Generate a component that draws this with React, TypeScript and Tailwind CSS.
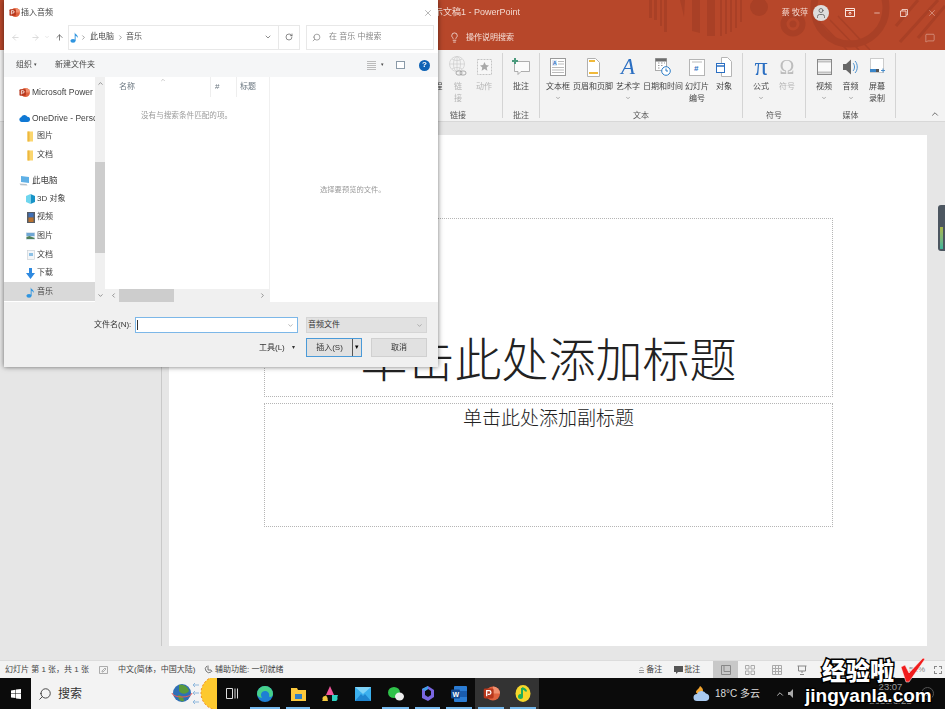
import { ChevronDown, ChevronUp, ChevronLeft, ChevronRight, ArrowLeft, ArrowRight, ArrowUp, RotateCw, Search, X, Lightbulb, MessageSquare, Minus, User } from "lucide-react";
import type { ReactNode } from "react";

function PptIcon({ size = 11 }: { size?: number }) {
  return (
    <svg width={size} height={size} viewBox="0 0 12 12" className="shrink-0">
      <circle cx="7" cy="6" r="5" fill="#e0633f" />
      <path d="M7 1a5 5 0 0 1 5 5H7z" fill="#f0906f" />
      <rect x="0.5" y="2.5" width="7" height="7" rx="1" fill="#b7371c" />
      <path d="M2.6 8V4h1.7a1.2 1.2 0 0 1 0 2.6H3.4" stroke="#fff" strokeWidth="0.9" fill="none" />
    </svg>
  );
}

function Note({ size = 12, color = "#2f95e0" }: { size?: number; color?: string }) {
  return (
    <svg width={size} height={size} viewBox="0 0 12 12" className="shrink-0">
      <ellipse cx="4" cy="9.8" rx="2.6" ry="1.9" fill={color} />
      <path d="M5.7 9.8V1.2C6 3.4 9.6 4 8.7 7 8.3 5.6 7 5 6.6 4.8V9.8z" fill={color} />
    </svg>
  );
}

function FolderTab() {
  return (
    <svg width="7" height="11" viewBox="0 0 7 11" className="shrink-0">
      <rect x="0.5" y="0.5" width="5.5" height="10" fill="#fbd66f" />
      <rect x="0.5" y="0.5" width="2" height="10" fill="#eeb83f" />
    </svg>
  );
}

const treeIcons: Record<string, ReactNode> = {
  ppt: <PptIcon />,
  cloud: (
    <svg width="11" height="8" viewBox="0 0 11 8" className="shrink-0">
      <path d="M2.5 8a2.4 2.4 0 0 1-.4-4.7A3.4 3.4 0 0 1 8.4 2.8 2.6 2.6 0 0 1 8.5 8z" fill="#0f78d4" />
    </svg>
  ),
  folder: <FolderTab />,
  pc: (
    <svg width="11" height="11" viewBox="0 0 11 11" className="shrink-0">
      <path d="M2 1l8 1v6L2 7z" fill="#5fb0e6" />
      <path d="M0.5 8.5l7 .5 1 1.5-7-.3z" fill="#b9c2ca" />
    </svg>
  ),
  cube: (
    <svg width="9" height="10" viewBox="0 0 9 10" className="shrink-0">
      <path d="M4.5 0L9 2v6l-4.5 2z" fill="#1893c7" />
      <path d="M4.5 0L0 2v6l4.5 2z" fill="#6fd6ee" />
    </svg>
  ),
  video: (
    <svg width="8" height="11" viewBox="0 0 8 11" className="shrink-0">
      <rect width="8" height="11" fill="#555c66" />
      <rect x="1.5" y="1" width="5" height="4.5" fill="#3f6fb5" />
      <rect x="1.5" y="5.5" width="5" height="4.5" fill="#b9722f" />
    </svg>
  ),
  image: (
    <svg width="9" height="8" viewBox="0 0 9 8" className="shrink-0">
      <rect width="9" height="8" fill="#dbe6ee" />
      <rect x="0.5" y="1" width="8" height="3" fill="#6fa6d4" />
      <path d="M0.5 7V5l3-1 5 2v1z" fill="#4f7f59" />
    </svg>
  ),
  doc: (
    <svg width="8" height="10" viewBox="0 0 8 10" className="shrink-0">
      <rect x="0.5" y="0.5" width="7" height="9" fill="#f4f6f8" stroke="#c4ccd3" strokeWidth="0.6" />
      <rect x="2" y="3" width="4" height="3" fill="#8cc0e5" />
    </svg>
  ),
  down: (
    <svg width="9" height="11" viewBox="0 0 9 11" className="shrink-0">
      <path d="M3 0h3v5h3L4.5 11 0 5h3z" fill="#2f8ae0" />
    </svg>
  ),
  note: <Note size={12} />,
};

function TreeRow({ icon, label, sub, active, top }: { icon: string; label: string; sub?: boolean; active?: boolean; top?: boolean }) {
  return (
    <div className={`flex h-[18.6px] items-center whitespace-nowrap overflow-hidden ${sub ? "gap-[1px] pl-[21px] text-[8px]" : "gap-[2px] pl-[15px]"} ${active ? "bg-[#d9d9d9]" : ""} ${top ? "mt-[6.5px]" : ""}`}>
      <span className="flex w-[11px] justify-center">{treeIcons[icon]}</span>
      <span>{label}</span>
    </div>
  );
}

function FileDialog() {
  return (
    <div className="absolute left-[4px] top-0 z-10 flex h-[367px] w-[434px] flex-col bg-white text-[#4a4a4a] shadow-[0_0_5px_rgba(0,0,0,0.55)] text-[8px]">
      <div className="flex h-[24px] shrink-0 items-center gap-[1px] pl-[5px] pr-[5px] pt-[1px] text-[#444]">
        <PptIcon size={11} />
        <span className="text-[8px]">插入音频</span>
        <X size={10} strokeWidth={1} className="ml-auto text-[#555]" />
      </div>

      <div className="flex h-[26px] shrink-0 items-center pl-[7px] pr-[4px]">
        <ArrowLeft size={9} className="text-[#d0d0d0]" />
        <ArrowRight size={9} className="ml-[11px] text-[#d0d0d0]" />
        <ChevronDown size={6} className="ml-[4px] text-[#d0d0d0]" />
        <ArrowUp size={9} className="ml-[5px] text-[#555]" />
        <div className="ml-[4px] flex h-[25px] w-[232px] items-center border border-[#e8e8e8] pl-[0px]">
          <Note size={12} />
          <ChevronRight size={7} className="ml-[-1px] text-[#666]" />
          <span className="ml-[3px]">此电脑</span>
          <ChevronRight size={7} className="ml-[3px] text-[#666]" />
          <span className="ml-[2px]">音乐</span>
          <ChevronDown size={8} className="ml-auto mr-[6px] text-[#555]" />
          <div className="flex h-full w-[21px] items-center justify-center border-l border-[#e8e8e8]">
            <RotateCw size={8} className="text-[#555]" />
          </div>
        </div>
        <div className="ml-[6px] flex h-[25px] flex-1 items-center border border-[#e8e8e8] pl-[5px] text-[#888]">
          <Search size={9} className="-scale-x-100 text-[#888]" />
          <span className="ml-[8px]">在 音乐 中搜索</span>
        </div>
      </div>

      <div className="mt-[3px] flex h-[24px] shrink-0 items-center bg-[#f5f6f7] pl-[12px] pr-[8px]">
        <span>组织</span>
        <span className="ml-[2px] text-[5px]">▾</span>
        <span className="ml-[18px]">新建文件夹</span>
        <svg width="9" height="9" viewBox="0 0 9 9" className="ml-auto">
          <path d="M0 .5h9M0 2.5h9M0 4.500h9M0 6.500h9M0 8.500h9" stroke="#bbb" />
        </svg>
        <span className="ml-[5px] text-[5px]">▾</span>
        <span className="ml-[12px] h-[8px] w-[9px] border border-[#8a9aa8] bg-white" />
        <span className="ml-[14px] flex h-[11px] w-[11px] items-center justify-center rounded-full bg-[#0f63b5] text-[8px] font-bold text-white">?</span>
      </div>

      <div className="flex h-[225px] shrink-0">
        <div className="w-[91px] shrink-0 pt-[6.5px] text-[8.5px] text-[#3f3f3f]">
          <TreeRow icon="ppt" label="Microsoft Power" />
          <TreeRow icon="cloud" label="OneDrive - Persc" top />
          <TreeRow icon="folder" label="图片" sub />
          <TreeRow icon="folder" label="文档" sub />
          <TreeRow icon="pc" label="此电脑" top />
          <TreeRow icon="cube" label="3D 对象" sub />
          <TreeRow icon="video" label="视频" sub />
          <TreeRow icon="image" label="图片" sub />
          <TreeRow icon="doc" label="文档" sub />
          <TreeRow icon="down" label="下载" sub />
          <TreeRow icon="note" label="音乐" sub active />
        </div>
        <div className="flex w-[10px] shrink-0 flex-col items-center bg-[#f0f0f0] text-[#555]">
          <ChevronUp size={7} className="mt-[3px]" />
          <div className="mt-[75px] h-[91px] w-full bg-[#cdcdcd]" />
          <ChevronDown size={7} className="mt-auto mb-[3px]" />
        </div>
        <div className="flex w-[165px] shrink-0 flex-col border-r border-[#f0f0f0]">
          <div className="relative flex h-[20px] shrink-0 items-center text-[#6b7780]">
            <span className="ml-[14px] w-[92px] border-r border-[#eee] leading-[20px]">名称</span>
            <span className="w-[26px] border-r border-[#eee] pl-[4px] leading-[20px]">#</span>
            <span className="pl-[3px] leading-[20px]">标题</span>
            <ChevronUp size={6} className="absolute left-[55px] top-0 text-[#999]" />
          </div>
          <div className="mt-[13px] pl-[36px] text-[7.6px] text-[#9a9a9a]">没有与搜索条件匹配的项。</div>
          <div className="mt-auto flex h-[13px] items-center bg-[#f0f0f0] pl-[5px] text-[#555]">
            <ChevronLeft size={7} />
            <div className="ml-[2px] h-full w-[55px] bg-[#cdcdcd]" />
            <ChevronRight size={7} className="ml-auto mr-[3px]" />
          </div>
        </div>
        <div className="flex-1 pl-[50px] pt-[108px] text-[7.300px] text-[#9a9a9a]">选择要预览的文件。</div>
      </div>

      <div className="flex flex-1 flex-col bg-[#f0f0f0] pl-[90px] pr-[11px] pt-[15px] text-[#333]">
        <div className="flex h-[16px] items-center">
          <span className="w-[41px] whitespace-nowrap">文件名(N):</span>
          <div className="flex h-[16px] w-[163px] items-center justify-between border border-[#7cb7e8] bg-white pl-[1px] pr-[3px]">
            <span className="h-[10px] w-px bg-[#333]" />
            <ChevronDown size={7} className="text-[#888]" />
          </div>
          <div className="ml-[8px] flex h-[16px] flex-1 items-center justify-between border border-[#d5d5d5] bg-[#e1e1e1] pl-[1px] pr-[3px]">
            <span>音频文件</span>
            <ChevronDown size={7} className="text-[#888]" />
          </div>
        </div>
        <div className="mt-[5px] flex h-[19px] items-center">
          <span className="ml-[165px] w-[26px] whitespace-nowrap">工具(L)</span>
          <span className="ml-[7px] text-[6px]">▾</span>
          <div className="ml-[11px] flex h-[19px] w-[56px] border border-[#4a9ad8] bg-[#e1e1e1]">
            <span className="flex-1 text-center leading-[17px]">插入(S)</span>
            <span className="flex w-[9px] items-center justify-center border-l border-[#555] text-[7px] text-black">▾</span>
          </div>
          <div className="ml-[9px] h-[19px] flex-1 border border-[#d0d0d0] bg-[#e1e1e1] text-center leading-[17px]">取消</div>
        </div>
      </div>
    </div>
  );
}

function TitleArt() {
  return (
    <svg width="945" height="50" viewBox="0 0 945 50" className="absolute left-0 top-0" fill="#a94026">
      <path d="M649 0h3v18h-3zM654 0h3v20h-3zM660 0h2v26h-2zM664 0h3v32h-3zM680 0h5l-1 17zM692 0h8v33l-8-2zM707 0h8v36h-8zM720 0h2v36h-2zM725 0h2v34h-2zM730 0h2v32h-2zM735 0h2v28h-2zM740 0h2v22h-2z" />
      <circle cx="759" cy="7" r="9" />
      <circle cx="793" cy="24" r="9.5" fill="none" stroke="#a94026" strokeWidth="6" />
      <circle cx="793" cy="24" r="3.5" />
      <circle cx="850" cy="8" r="36" fill="none" stroke="#a94026" strokeWidth="7" />
      <path d="M822 24l25 26M830 20l29 30M838 16l32 34" stroke="#a94026" strokeWidth="1.5" fill="none" />
      <path d="M896 26l22-26M900 42l38-42M918 38l27-32" stroke="#a94026" strokeWidth="3" fill="none" />
    </svg>
  );
}

function TitleBar() {
  return (
    <div className="relative h-[50px] shrink-0 bg-[#b7472a] text-[#f3d9d0]">
      <TitleArt />
      <div className="relative flex h-[25px] items-center text-[9px]">
        <span className="ml-[425px] whitespace-nowrap">演示文稿1 - PowerPoint</span>
        <span className="ml-auto text-[8px] whitespace-nowrap">蔡 牧萍</span>
        <span className="ml-[5px] flex h-[16px] w-[16px] items-center justify-center rounded-full bg-[#dedede] text-[#555]">
          <User size={12} strokeWidth={1.5} />
        </span>
        <svg width="10" height="9" viewBox="0 0 10 9" className="ml-[16px]" fill="none" stroke="#fbe6df">
          <path d="M.5.5h9v8h-9zM.5 2.500h9M5 7V4M3.500 5.300L5 4l1.500 1.300" />
        </svg>
        <Minus size={8} className="ml-[18px] text-[#fbe6df]" />
        <svg width="8" height="8" viewBox="0 0 8 8" className="ml-[19px]" fill="none" stroke="#fbe6df" strokeWidth="0.8">
          <path d="M.5 2h5.500v5.500H.5zM2 2V.5h5.500V6H6" />
        </svg>
        <X size={10} strokeWidth={1} className="ml-[19px] mr-[8px] text-[#fbe6df]" />
      </div>
      <div className="relative flex h-[25px] items-center text-[8px]">
        <Lightbulb size={11} strokeWidth={1.5} className="ml-[449px] text-white" />
        <span className="ml-[6px] text-[#f6e1da]">操作说明搜索</span>
        <MessageSquare size={10} strokeWidth={1} className="ml-auto mr-[10px] text-[#f6e1da]" />
      </div>
    </div>
  );
}

const ribbonIcons: Record<string, ReactNode> = {
  link: (
    <svg width="18" height="22" viewBox="0 0 18 22" fill="none" stroke="#cfcfcf" strokeWidth="0.8">
      <circle cx="8" cy="8" r="7.500" />
      <path d="M.5 8h15M8 .5v15M3 3c3 2 7 2 10 0M3 13c3-2 7-2 10 0" />
      <ellipse cx="8" cy="8" rx="3.500" ry="7.500" />
      <rect x="7" y="15" width="6" height="4" rx="2" stroke="#999" fill="#f3f3f3" />
      <rect x="11" y="15" width="6" height="4" rx="2" stroke="#999" />
    </svg>
  ),
  action: (
    <svg width="15" height="16" viewBox="0 0 15 16">
      <rect x="0.500" y="0.500" width="14" height="15" fill="#f7f7f7" stroke="#c4c4c4" strokeDasharray="2 1" />
      <path d="M7.500 3l1.400 3 3.100.4-2.300 2.100.7 3.200-2.900-1.700-2.900 1.700.7-3.200L3 6.400 6.100 6z" fill="#a9a9a9" />
    </svg>
  ),
  comment: (
    <svg width="18" height="18" viewBox="0 0 18 18">
      <path d="M2.500 3.500h15v10H9l-3 3v-3H2.500z" fill="#fbfbfb" stroke="#9a9a9a" strokeWidth="0.8" />
      <path d="M3 0v6M0 3h6" stroke="#4a9a7c" strokeWidth="2" />
    </svg>
  ),
  textbox: (
    <svg width="16" height="18" viewBox="0 0 16 18">
      <rect x="0.500" y="0.500" width="15" height="17" fill="#fff" stroke="#9a9a9a" />
      <rect x="2" y="2" width="5" height="6" fill="#dfe9f5" />
      <text x="2.800" y="7" fontSize="5.500" fontWeight="700" fill="#2b6fc2" fontFamily="Liberation Sans">A</text>
      <path d="M8 3.500h6M8 6h6M2 9.500h12M2 12h12M2 14.500h12" stroke="#aaa" strokeWidth="0.8" />
    </svg>
  ),
  header: (
    <svg width="13" height="19" viewBox="0 0 13 19">
      <path d="M.5.5h8l4 4v14H.5z" fill="#fff" stroke="#b0b0b0" />
      <rect x="2" y="2" width="6" height="2" fill="#f0b93a" />
      <rect x="2" y="14" width="9" height="2" fill="#f0b93a" />
    </svg>
  ),
  art: <span className="text-[23px] italic leading-[22px] text-[#2b6fc2] [font-family:'Liberation_Serif',serif]">A</span>,
  date: (
    <svg width="16" height="18" viewBox="0 0 16 18">
      <rect x="0.500" y="0.500" width="11" height="12" fill="#fff" stroke="#aaa" />
      <rect x="0.500" y="0.500" width="11" height="3" fill="#6d6d6d" />
      <path d="M3 5h1.500M6 5h1.500M9 5h1M3 7.500h1.500M6 7.500h1.500M3 10h1.500" stroke="#999" />
      <circle cx="11" cy="13" r="4.300" fill="#fff" stroke="#2b7cc7" />
      <path d="M11 10.500V13h2" stroke="#2b7cc7" fill="none" />
    </svg>
  ),
  slidenum: (
    <svg width="16" height="17" viewBox="0 0 16 17">
      <rect x="0.500" y="0.500" width="15" height="16" fill="#fff" stroke="#b5b5b5" />
      <path d="M3 3h10" stroke="#aaa" strokeWidth="0.8" />
      <text x="5" y="12" fontSize="8" fontWeight="700" fill="#2b6fc2" fontFamily="Liberation Sans">#</text>
    </svg>
  ),
  object: (
    <svg width="16" height="20" viewBox="0 0 16 20">
      <path d="M5.500.5h6l4 4v15h-10z" fill="#fff" stroke="#b5b5b5" />
      <rect x="0.500" y="6.500" width="8" height="9" fill="#fff" stroke="#2b6fc2" />
      <path d="M.5 9h8" stroke="#2b6fc2" strokeWidth="1.500" />
    </svg>
  ),
  pi: <span className="text-[26px] leading-[22px] text-[#2b6fc2] [font-family:'Liberation_Serif',serif]">π</span>,
  omega: <span className="text-[20px] leading-[22px] text-[#bdbdbd] [font-family:'Liberation_Serif',serif]">Ω</span>,
  video: (
    <svg width="15" height="16" viewBox="0 0 15 16">
      <rect x="0.500" y="0.500" width="14" height="15" fill="#fafafa" stroke="#888" />
      <path d="M.5 2.500h14M.5 13.500h14" stroke="#888" strokeWidth="2" strokeDasharray="1 1" />
    </svg>
  ),
  audio: (
    <svg width="15" height="16" viewBox="0 0 15 16" fill="none">
      <path d="M0 5h3l5-4.500v15L3 11H0z" fill="#666" />
      <path d="M10 4c2 2 2 6 0 8M12 2c3 3 3 9 0 12" stroke="#3b86c9" strokeWidth="0.9" />
    </svg>
  ),
  screen: (
    <svg width="15" height="18" viewBox="0 0 15 18">
      <rect x="0.500" y="0.500" width="13" height="14" fill="#fff" stroke="#ccc" />
      <rect x="0" y="11" width="6" height="3" fill="#3b86c9" />
      <rect x="6" y="11" width="3" height="3" fill="#555" />
      <path d="M11 12.500h4M13 10.500v4" stroke="#3b86c9" strokeWidth="0.9" />
    </svg>
  ),
};

function RibbonItem({ w, icon, label, chevron, muted }: { w: number; icon: string; label: string[]; chevron?: boolean; muted?: boolean }) {
  return (
    <div style={{ width: w }} className={`flex shrink-0 flex-col items-center ${muted ? "text-[#b5b5b5]" : "text-[#444]"}`}>
      <div className="flex h-[28px] items-center justify-center">{ribbonIcons[icon]}</div>
      {label.map((l) => (
        <span key={l} className="whitespace-nowrap leading-[12px]">{l}</span>
      ))}
      {chevron && <ChevronDown size={6} className="mt-[2px] text-[#666]" />}
    </div>
  );
}

function RibbonGroup({ title, width, pad = 0, titleClass = "left-0 right-0", children }: { title: string; width: number; pad?: number; titleClass?: string; children: ReactNode }) {
  return (
    <div style={{ width, paddingLeft: pad }} className="relative my-[3px] flex shrink-0 border-r border-[#d4d4d4]">
      {children}
      <span className={`absolute bottom-[-4px] text-center leading-[12px] text-[#555] ${titleClass}`}>{title}</span>
    </div>
  );
}

function Ribbon() {
  return (
    <div className="relative flex h-[72px] shrink-0 border-b border-[#d8d8d8] bg-[#f3f3f3] text-[8px]">
      <RibbonGroup title="链接" width={503} pad={432} titleClass="left-[445px] w-[26px]">
        <RibbonItem w={13} icon="none" label={["程"]} />
        <RibbonItem w={26} icon="link" label={["链", "接"]} muted />
        <RibbonItem w={26} icon="action" label={["动作"]} muted />
      </RibbonGroup>
      <RibbonGroup title="批注" width={37} pad={0}>
        <RibbonItem w={36} icon="comment" label={["批注"]} />
      </RibbonGroup>
      <RibbonGroup title="文本" width={203} pad={1}>
        <RibbonItem w={34} icon="textbox" label={["文本框"]} chevron />
        <RibbonItem w={36} icon="header" label={["页眉和页脚"]} />
        <RibbonItem w={34} icon="art" label={["艺术字"]} chevron />
        <RibbonItem w={36} icon="date" label={["日期和时间"]} />
        <RibbonItem w={32} icon="slidenum" label={["幻灯片", "编号"]} />
        <RibbonItem w={22} icon="object" label={["对象"]} />
      </RibbonGroup>
      <RibbonGroup title="符号" width={63} pad={5}>
        <RibbonItem w={26} icon="pi" label={["公式"]} chevron />
        <RibbonItem w={26} icon="omega" label={["符号"]} muted />
      </RibbonGroup>
      <RibbonGroup title="媒体" width={90} pad={5}>
        <RibbonItem w={26} icon="video" label={["视频"]} chevron />
        <RibbonItem w={27} icon="audio" label={["音频"]} chevron />
        <RibbonItem w={26} icon="screen" label={["屏幕", "录制"]} />
      </RibbonGroup>
      <ChevronUp size={10} className="absolute bottom-[2px] right-[5px] text-[#555]" />
    </div>
  );
}

function Workspace() {
  return (
    <div className="flex min-h-0 flex-1 bg-[#e6e6e6] pb-[14px]">
      <div className="w-[162px] shrink-0 border-r border-[#c9c9c9]" />
      <div className="ml-[7px] mt-[13px] flex w-[758px] shrink-0 flex-col bg-white pl-[95px] pt-[83px] text-[#222]">
        <div className="flex h-[179px] w-[569px] items-end justify-center border border-dotted border-[#b5b5b5] text-[47px] font-light leading-[70px]">
          单击此处添加标题
        </div>
        <div className="mt-[6px] flex h-[124px] w-[569px] justify-center border border-dotted border-[#b5b5b5] text-[19px] font-light leading-[29px]">
          单击此处添加副标题
        </div>
      </div>
    </div>
  );
}

function StatusBar() {
  return (
    <div className="flex h-[18px] shrink-0 items-center border-t border-[#dcdcdc] bg-[#f3f3f3] pl-[5px] pr-[3px] text-[8px] text-[#444]">
      <span className="w-[93px] whitespace-nowrap">幻灯片 第 1 张，共 1 张</span>
      <svg width="9" height="8" viewBox="0 0 9 8" className="ml-[1px]" fill="none" stroke="#999" strokeWidth="0.8">
        <path d="M.5.5h8v7h-8zM3 5l3-3 1 1-3 3H3z" />
      </svg>
      <span className="ml-[10px] w-[80px] whitespace-nowrap">中文(简体，中国大陆)</span>
      <svg width="9" height="9" viewBox="0 0 9 9" className="ml-[6px]" fill="none" stroke="#555" strokeWidth="0.8">
        <path d="M3 1a3.500 3.500 0 1 0 4 6M4 .5V5h3l1 2" />
      </svg>
      <span className="ml-[2px] whitespace-nowrap">辅助功能: 一切就绪</span>
      <div className="ml-auto flex items-center">
        <svg width="5" height="7" viewBox="0 0 5 7" fill="none" stroke="#999"><path d="M0 4.500h5M0 6.500h5M1 2.500L2.500 1 4 2.500" /></svg>
        <span className="ml-[2px]">备注</span>
        <svg width="9" height="8" viewBox="0 0 9 8" className="ml-[12px]"><path d="M0 0h9v6H4L2 8V6H0z" fill="#555" /></svg>
        <span className="ml-[1px]">批注</span>
        <div className="ml-[13px] flex h-[17px] w-[25px] items-center justify-center bg-[#c8c8c8]">
          <svg width="10" height="10" viewBox="0 0 10 10" fill="none" stroke="#888"><path d="M.5.5h9v9h-9zM3 .5v6h6.500" /></svg>
        </div>
        <svg width="10" height="10" viewBox="0 0 10 10" className="ml-[7px]" fill="none" stroke="#aaa"><path d="M.5.5h3.500v3.500H.5zM6 .5h3.500v3.500H6zM.5 6h3.500v3.500H.5zM6 6h3.500v3.500H6z" /></svg>
        <svg width="10" height="10" viewBox="0 0 10 10" className="ml-[17px]" fill="none" stroke="#aaa"><path d="M.5.5h9v9h-9zM3.500.5v9M6.500.5v9M.5 3.500h9M.5 6.500h9" /></svg>
        <svg width="10" height="10" viewBox="0 0 10 10" className="ml-[15px]" fill="none" stroke="#888"><path d="M.5 1h9M1.500 1v5h7V1M5 6v2M3 9.500h4" /></svg>
        <span className="ml-[95px] text-[#888]">+</span>
        <span className="ml-[2px] text-[#888]">52%</span>
        <span className="ml-[9px] h-[8px] w-[8px] border border-dashed border-[#888]" />
      </div>
    </div>
  );
}

function TaskIcon({ w, active, bar, children }: { w: number; active?: boolean; bar?: boolean; children: ReactNode }) {
  return (
    <div style={{ width: w }} className={`relative flex h-full shrink-0 items-center justify-center ${active ? "bg-[#333333]" : ""}`}>
      {children}
      {bar && <span className="absolute bottom-0 left-[3px] right-[3px] h-[2px] bg-[#76b9ed]" />}
    </div>
  );
}

function Taskbar() {
  return (
    <div className="flex h-[31px] shrink-0 items-center bg-[#0b0b0b] text-white">
      <div className="flex h-full w-[31px] shrink-0 items-center justify-center">
        <svg width="10" height="10" viewBox="0 0 10 10" fill="#fff"><path d="M0 1.400L4.500.7v3.900H0zM5 .6L10 0v4.600H5zM0 5.100h4.500V9L0 8.400zM5 5.100h5V10L5 9.400z" /></svg>
      </div>
      <div className="relative flex h-full w-[186px] shrink-0 items-center overflow-hidden bg-[#f3f3f3] pl-[7px] text-[#333]">
        <Search size={14} strokeWidth={1.5} className="-scale-x-100" />
        <span className="ml-[6px] text-[12px]">搜索</span>
        <svg width="50" height="31" viewBox="0 0 50 31" className="absolute right-0 top-0">
          <circle cx="15" cy="15" r="9" fill="#2f6fb5" />
          <path d="M12 7c5-1 9 2 10 6-3 4-8 3-10 0zM11 17c3 0 6 2 6 6-3 1-6-1-6-6z" fill="#5a9a3a" />
          <path d="M5 15a10 4 0 0 0 20 0" stroke="#e85a5a" fill="none" />
          <path d="M32 7h-6M26 7l2-2M26 7l2 2M32 15h-6M26 15l2-2M26 15l2 2M32 24h-6M26 24l2-2M26 24l2 2" stroke="#8fb8dd" fill="none" />
          <circle cx="51" cy="15" r="17" fill="#fdc92f" stroke="#f08a24" strokeDasharray="2 2" />
        </svg>
      </div>
      <TaskIcon w={30}>
        <svg width="12" height="11" viewBox="0 0 12 11" fill="none" stroke="#ddd"><path d="M.5.500h6v10h-6zM9 .5v10M11.500.5v10" /></svg>
      </TaskIcon>
      <TaskIcon w={36} bar>
        <svg width="16" height="16" viewBox="0 0 16 16">
          <circle cx="8" cy="8" r="8" fill="#1e7fd4" />
          <path d="M0 8a8 8 0 0 1 16 0c0 3-3 3.500-4 2.500 1-3-1-5.500-4-5.500-4 0-5 4-3 7-2-.5-5-1.500-5-4z" fill="#46d18a" />
        </svg>
      </TaskIcon>
      <TaskIcon w={30} bar>
        <svg width="15" height="14" viewBox="0 0 15 14">
          <path d="M0 1h6l1 2h8v11H0z" fill="#fbc93d" />
          <rect x="4" y="7" width="7" height="5" fill="#2f7fc8" />
        </svg>
      </TaskIcon>
      <TaskIcon w={34}>
        <svg width="16" height="15" viewBox="0 0 16 15">
          <path d="M8 0l4 9H4z" fill="#f0569a" />
          <path d="M4 9l-4 6h6z" fill="#f3c93d" />
          <path d="M10 9l6 0-2 6h-4z" fill="#2fd0c0" />
          <circle cx="3" cy="12.500" r="2.500" fill="#f3c93d" />
          <circle cx="13" cy="12.500" r="2.500" fill="#2fd0c0" />
        </svg>
      </TaskIcon>
      <TaskIcon w={32}>
        <svg width="16" height="14" viewBox="0 0 16 14">
          <rect width="16" height="14" fill="#3bb0ee" />
          <path d="M0 0l8 7 8-7" fill="#7fd3f7" />
          <path d="M0 14l6-7 2 2 2-2 6 7z" fill="#1f86d0" />
        </svg>
      </TaskIcon>
      <TaskIcon w={33} bar>
        <svg width="16" height="14" viewBox="0 0 16 14">
          <ellipse cx="6" cy="5.500" rx="6" ry="5.500" fill="#2fc24a" />
          <ellipse cx="11.500" cy="9.500" rx="4.500" ry="4" fill="#eee" />
        </svg>
      </TaskIcon>
      <TaskIcon w={31} bar>
        <svg width="12" height="15" viewBox="0 0 12 15">
          <path d="M0 3l6-3 6 4v7l-6 4-6-3z" fill="#7a66e0" />
          <path d="M3 5l3-2 3 2v4l-3 2-3-2z" fill="#0b0b0b" />
          <path d="M0 3l6-3v3L3 5z" fill="#3fa0e8" />
        </svg>
      </TaskIcon>
      <TaskIcon w={32} bar>
        <svg width="16" height="16" viewBox="0 0 16 16">
          <rect x="3" y="0" width="13" height="16" rx="1" fill="#2b7cd3" />
          <rect x="3" y="5" width="13" height="6" fill="#1a5cad" />
          <rect x="0" y="3.500" width="9" height="9" rx="1" fill="#14488f" />
          <text x="1.500" y="10.500" fontSize="7" fontWeight="700" fill="#fff" fontFamily="Liberation Sans">W</text>
        </svg>
      </TaskIcon>
      <TaskIcon w={32} active bar><PptIcon size={17} /></TaskIcon>
      <TaskIcon w={32} active bar>
        <svg width="16" height="17" viewBox="0 0 16 17">
          <ellipse cx="8" cy="8.500" rx="7.500" ry="8.500" fill="#f6d72b" />
          <path d="M7 3v8M7 3c2 1 4 1.500 4 3.500" stroke="#1fae5c" strokeWidth="2" fill="none" />
          <circle cx="5.500" cy="11.500" r="2.500" fill="#1fae5c" />
        </svg>
      </TaskIcon>
      <div className="ml-auto mr-[11px] flex h-full items-center text-[#dcdcdc]">
        <svg width="17" height="15" viewBox="0 0 17 15">
          <path d="M7 0c-1 3-4 4-4 6s4 3 6 1 1-5-2-7z" fill="#f3a52f" />
          <path d="M4 15a3.500 3.500 0 0 1 0-7 5 5 0 0 1 9-.5 3.800 3.800 0 0 1 0 7.500z" fill="#a9c9ef" />
        </svg>
        <span className="ml-[5px] w-[45px] text-[10px] whitespace-nowrap">18°C 多云</span>
        <ChevronUp size={10} className="ml-[15px]" />
        <svg width="8" height="9" viewBox="0 0 8 9" className="ml-[3px]" fill="#aaa"><path d="M0 3h2l3-3v9L2 6H0z" /></svg>
        <div className="ml-[72px] flex w-[45px] flex-col items-center text-[9.500px] leading-[14px] text-[#999]">
          <span>23:07</span>
          <span className="whitespace-nowrap">2023/3/21</span>
        </div>
        <span className="ml-[8px] flex h-[13px] w-[13px] items-center justify-center rounded-full border border-[#555] text-[8px]">2</span>
      </div>
    </div>
  );
}

function Watermark() {
  return (
    <div className="absolute left-[805px] top-[657px] z-20 w-[130px]">
      <div className="flex items-start pl-[17px]">
        <span className="text-[24px] font-black leading-[30px] whitespace-nowrap text-white [-webkit-text-stroke:3px_#000] [paint-order:stroke_fill]">经验啦</span>
        <svg width="28" height="26" viewBox="0 0 28 26" className="ml-[4px] shrink-0">
          <path d="M3 10l4-2 4 8L25 1l2 1-16 23H8z" fill="#f01c1c" stroke="#fff" strokeWidth="0.5" />
        </svg>
      </div>
      <div className="-mt-[3px] text-[19px] font-bold leading-[23px] whitespace-nowrap text-white [font-family:'Liberation_Sans',sans-serif] [-webkit-text-stroke:2.5px_#000] [paint-order:stroke_fill]">jingyanla.com</div>
    </div>
  );
}

export default function App() {
  return (
    <div className="relative flex h-[709px] w-[945px] flex-col overflow-hidden blur-[0.5px] [font-family:'Liberation_Sans','Noto_Sans_CJK_SC',sans-serif]">
      <TitleBar />
      <Ribbon />
      <Workspace />
      <StatusBar />
      <Taskbar />
      <FileDialog />
      <Watermark />
      <div className="absolute right-0 top-[205px] h-[46px] w-[7px] rounded-l-[3px] bg-[#4c5660]">
        <div className="absolute bottom-[2px] left-[2px] h-[22px] w-[3px] bg-gradient-to-b from-[#a9b64a] to-[#3ab59a]" />
      </div>
    </div>
  );
}
